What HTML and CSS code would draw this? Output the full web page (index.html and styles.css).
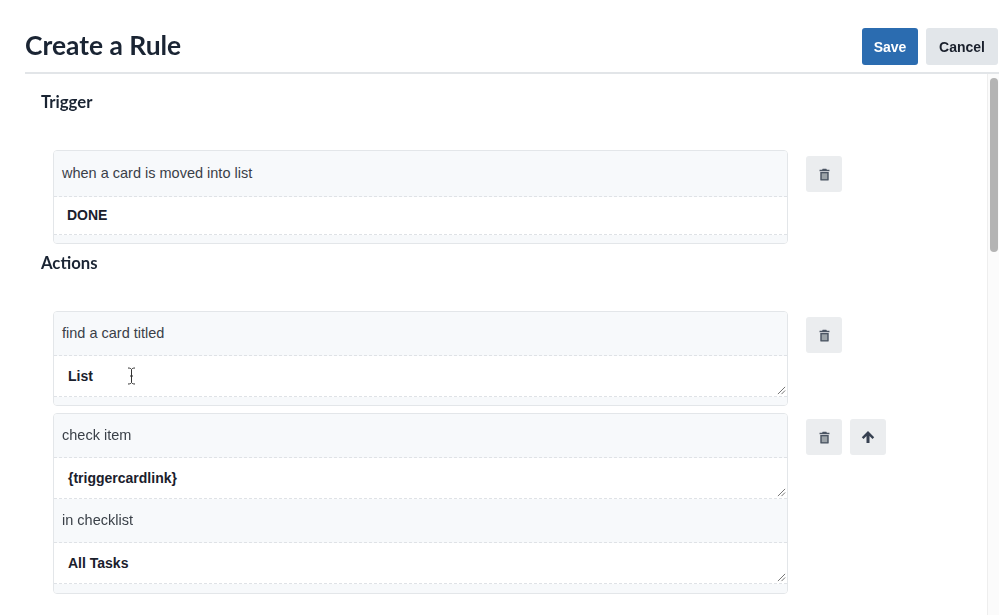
FILE: index.html
```html
<!DOCTYPE html>
<html lang="en">
<head>
<meta charset="utf-8">
<title>Create a Rule</title>
<link rel="stylesheet" href="styles.css">
</head>
<body>
<div class="page">
  <header class="header">
    <h1 class="title">Create a Rule</h1>
    <div class="header-actions">
      <button class="btn btn-primary">Save</button>
      <button class="btn btn-secondary">Cancel</button>
    </div>
  </header>
  <div class="body-wrap">
    <main class="content">
      <h2 class="section-title">Trigger</h2>
      <div class="rule-row rule-row-first">
        <div class="card">
          <div class="card-label card-label-tall">when a card is moved into list</div>
          <div class="card-value card-value-done">DONE</div>
          <div class="card-foot"></div>
        </div>
        <div class="tools">
          <button class="tool" aria-label="Delete">
            <svg class="icon-trash" viewBox="0 0 12 14"><path d="M4 0.6h4l.6 1.2H11.4v1.6H.6V1.8h2.8zM1.4 4.2h9.2v8.4a1 1 0 0 1-1 1H2.4a1 1 0 0 1-1-1z" fill="#4b5563"/><rect x="3" y="5.7" width="6" height="6.4" fill="#9ca3a8"/></svg>
          </button>
        </div>
      </div>
      <h2 class="section-title section-actions">Actions</h2>
      <div class="rule-row rule-row-first">
        <div class="card">
          <div class="card-label">find a card titled</div>
          <div class="card-value has-grip">List
            <svg class="grip" viewBox="0 0 10 10"><path d="M1 9 9 1M5 9 9 5" stroke="#666" stroke-width="1" fill="none"/></svg>
          </div>
          <div class="card-foot"></div>
        </div>
        <div class="tools">
          <button class="tool" aria-label="Delete">
            <svg class="icon-trash" viewBox="0 0 12 14"><path d="M4 0.6h4l.6 1.2H11.4v1.6H.6V1.8h2.8zM1.4 4.2h9.2v8.4a1 1 0 0 1-1 1H2.4a1 1 0 0 1-1-1z" fill="#4b5563"/><rect x="3" y="5.7" width="6" height="6.4" fill="#9ca3a8"/></svg>
          </button>
        </div>
      </div>
      <div class="rule-row">
        <div class="card">
          <div class="card-label">check item</div>
          <div class="card-value has-grip">{triggercardlink}
            <svg class="grip" viewBox="0 0 10 10"><path d="M1 9 9 1M5 9 9 5" stroke="#666" stroke-width="1" fill="none"/></svg>
          </div>
          <div class="card-label">in checklist</div>
          <div class="card-value has-grip">All Tasks
            <svg class="grip" viewBox="0 0 10 10"><path d="M1 9 9 1M5 9 9 5" stroke="#666" stroke-width="1" fill="none"/></svg>
          </div>
          <div class="card-foot card-foot-tall"></div>
        </div>
        <div class="tools">
          <button class="tool" aria-label="Delete">
            <svg class="icon-trash" viewBox="0 0 12 14"><path d="M4 0.6h4l.6 1.2H11.4v1.6H.6V1.8h2.8zM1.4 4.2h9.2v8.4a1 1 0 0 1-1 1H2.4a1 1 0 0 1-1-1z" fill="#4b5563"/><rect x="3" y="5.7" width="6" height="6.4" fill="#9ca3a8"/></svg>
          </button>
          <button class="tool" aria-label="Move up">
            <svg class="icon-up" viewBox="0 0 14 14"><path d="M7 1 13.200 7.200 11.500 8.900 8.500 5.900V13h-3V5.900L2.500 8.900.8 7.200z" fill="#374151"/></svg>
          </button>
        </div>
      </div>
    </main>
    <div class="scrollbar"><div class="thumb"></div></div>
  </div>
  <svg class="ibeam" viewBox="0 0 9 18"><path d="M1 1c2 0 3 .5 3.500 1.500C5 1.500 6 1 8 1M4.500 2.500v13M1 17c2 0 3-.5 3.500-1.500C5 16.500 6 17 8 17M3 9h3" stroke="#333" stroke-width="1" fill="none"/></svg>
</div>
</body>
</html>
```
FILE: styles.css
```css
* { box-sizing: border-box; }
html, body { margin: 0; height: 100%; overflow: hidden; background: #fff; }
body { font-family: "Liberation Sans", Arial, sans-serif; color: #1a202c; }
.page { position: relative; height: 615px; padding-left: 25px; display: flex; flex-direction: column; filter: blur(0.35px); }
.header { height: 74px; flex: none; display: flex; justify-content: space-between; align-items: flex-start; border-bottom: 2px solid #e2e5e8; }
.title { margin: 26px 0 0; font: 700 26.4px/38px Lato, sans-serif; color: #1a2433; }
.header-actions { display: flex; gap: 8px; margin-top: 28px; padding-right: 1px; }
.btn { height: 37px; border: 0; border-radius: 3px; font: 700 14px "Liberation Sans", Arial, sans-serif; padding: 0; }
.btn-primary { width: 56px; background: #2b6cb0; color: #fff; }
.btn-secondary { width: 72px; background: #e2e6ea; color: #1a202c; }
.body-wrap { flex: 1; min-height: 0; display: flex; }
.content { flex: 1; min-width: 0; padding: 18px 0 0 16px; overflow: hidden; }
.section-title { margin: 0; font: 700 16.7px/20px Lato, sans-serif; color: #1a2433; }
.section-actions { margin: 9px 0 38px; }
.section-actions + .rule-row-first { margin-top: 0; }
.rule-row { display: flex; align-items: flex-start; gap: 18px; margin: 7px 0 0 12px; }
.rule-row-first { margin-top: 38px; }
.card { width: 735px; flex: none; border: 1px solid #e3e6e9; border-radius: 4px; overflow: hidden; }
.card-label { height: 44px; padding: 0 8px 2px; display: flex; align-items: center; font-size: 14.5px; color: #3a4048; background: #f7f9fb; border-bottom: 1px dashed #dfe2e6; }
.card-label-tall { height: 46px; }
.card-value { position: relative; height: 38px; padding: 0 14px; display: flex; align-items: center; font-size: 14px; font-weight: 700; color: #1a202c; background: #fff; border-bottom: 1px dashed #dfe2e6; }
.card-value-done { padding: 0 13px 2px; }
.card-value.has-grip { height: 41px; }
.card-foot { height: 8px; background: #f7f9fb; }
.card-foot-tall { height: 9px; }
.grip { position: absolute; right: 1px; bottom: 1px; width: 9px; height: 9px; }
.tools { display: flex; gap: 8px; margin-top: 6px; }
.tool { width: 36px; height: 36px; padding: 0; border: 0; border-radius: 3px; background: #ebedef; display: flex; align-items: center; justify-content: center; }
.icon-trash { width: 11px; height: 13px; }
.icon-up { width: 14px; height: 14px; }
.scrollbar { width: 12px; flex: none; border-left: 1px solid #eeeeee; background: #fbfbfb; padding: 4px 1px 0 2px; }
.thumb { height: 174px; border-radius: 4px; background: #b4b4b4; }
.ibeam { position: absolute; left: 127px; top: 367px; width: 9px; height: 18px; }
```
